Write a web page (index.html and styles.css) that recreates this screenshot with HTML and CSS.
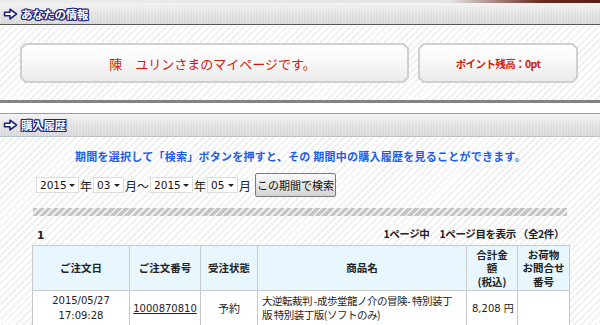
FILE: index.html
```html
<!DOCTYPE html>
<html lang="ja">
<head>
	<meta charset="UTF-8">
	<title>マイページ</title>
	<link rel="stylesheet" href="styles.css">
</head>
<body>
	<div class="top_line"></div>

	<div class="sec_head first">
		<svg class="arrow" width="15" height="12" viewBox="0 0 15 12"><path d="M1.5 4.2 H7 V1.2 L13.5 6 L7 10.8 V7.8 H1.5 Z" fill="#fff" stroke="#18227a" stroke-width="1.6" stroke-linejoin="round"/></svg>
		<span class="sec_title">あなたの情報</span>
	</div>
	<div class="info">
		<div class="box name_box"><div class="box_in">陳　ユリンさまのマイページです。</div></div>
		<div class="box point_box"><div class="box_in">ポイント残高：0pt</div></div>
	</div>

	<div class="sec_head second">
		<svg class="arrow" width="15" height="12" viewBox="0 0 15 12"><path d="M1.5 4.2 H7 V1.2 L13.5 6 L7 10.8 V7.8 H1.5 Z" fill="#fff" stroke="#18227a" stroke-width="1.6" stroke-linejoin="round"/></svg>
		<span class="sec_title">購入履歴</span>
	</div>
	<div class="history">
		<p class="guide">期間を選択して「検索」ボタンを押すと、その 期間中の購入履歴を見ることができます。</p>
		<div class="period">
			<span class="sel w43"><select><option>2015</option></select></span>
			<span class="unit">年</span>
			<span class="sel w31"><select><option>03</option></select></span>
			<span class="unit">月～</span>
			<span class="sel w43"><select><option>2015</option></select></span>
			<span class="unit">年</span>
			<span class="sel w31"><select><option>05</option></select></span>
			<span class="unit">月</span>
			<button class="search_btn">この期間で検索</button>
		</div>
		<div class="stripe_bar"></div>
		<div class="pager">
			<span class="count">1</span>
			<span class="page_info">1ページ中　1ページ目を表示 （全2件）</span>
		</div>
		<table class="orders">
			<colgroup>
				<col style="width:97px">
				<col style="width:71px">
				<col style="width:57px">
				<col style="width:209px">
				<col style="width:51px">
				<col style="width:52px">
			</colgroup>
			<tr>
				<th>ご注文日</th>
				<th>ご注文番号</th>
				<th>受注状態</th>
				<th>商品名</th>
				<th>合計金<br>額<br>(税込)</th>
				<th>お荷物<br>お問合せ<br>番号</th>
			</tr>
			<tr>
				<td class="c">2015/05/27<br>17:09:28</td>
				<td class="c"><a href="#">1000870810</a></td>
				<td class="c jp">予約</td>
				<td class="jp item">大逆転裁判 -成歩堂龍ノ介の冒険- 特別装丁版 特別装丁版(ソフトのみ)</td>
				<td class="price">8,208 円</td>
				<td></td>
			</tr>
		</table>
	</div>
</body>
</html>
```

FILE: styles.css
```css
*{
	margin: 0;
	padding: 0;
	box-sizing: border-box;
}
body{
	width: 600px;
	height: 325px;
	overflow: hidden;
	background-color: #fff;
	font-family: Verdana, "DejaVu Sans", "Noto Sans CJK JP", sans-serif;
	font-size: 12px;
	color: #222;
}
.top_line{
	height: 3px;
	background: linear-gradient(90deg, #ececec 0%, #e4e4e4 75%, #6a2a1e 90%, #5a1c14 100%);
}
.sec_head{
	display: flex;
	align-items: center;
	gap: 3px;
	height: 22px;
	padding-left: 3px;
	background: repeating-linear-gradient(90deg, rgba(255,255,255,0.25) 0 1px, rgba(0,0,0,0) 1px 3px),
		linear-gradient(#f2f2f2, #e2e2e2 50%, #d6d6d6);
	border-bottom: 1px solid #5a5a55;
}
.sec_head.second{
	height: 24px;
	border-top: 1px solid #a39a92;
	border-bottom: 1px solid #b8c4cc;
}
.sec_title{
	font-family: "Noto Sans CJK JP", sans-serif;
	font-size: 11.5px;
	font-weight: bold;
	color: #fff;
	letter-spacing: -0.3px;
	text-shadow: 1px 0 0 #18227a, -1px 0 0 #18227a, 0 1px 0 #18227a, 0 -1px 0 #18227a,
		1px 1px 0 #18227a, -1px -1px 0 #18227a, 1px -1px 0 #18227a, -1px 1px 0 #18227a;
}
.info,
.history{
	background: repeating-linear-gradient(135deg, #fff 0 3px, #f1f1f1 3px 5px);
}
.info{
	display: flex;
	gap: 9px;
	height: 78px;
	padding: 18px 0 0 20px;
	border-bottom: 3px solid #858380;
	margin-bottom: 10px;
}
.box{
	height: 40px;
	padding: 2px;
	background-color: #cfcfcf;
	clip-path: polygon(5px 0, calc(100% - 5px) 0, 100% 5px, 100% calc(100% - 5px), calc(100% - 5px) 100%, 5px 100%, 0 calc(100% - 5px), 0 5px);
}
.box_in{
	display: flex;
	align-items: center;
	justify-content: center;
	height: 100%;
	background: linear-gradient(#fff, #f7f7f7 50%, #ebebeb);
	clip-path: polygon(4px 0, calc(100% - 4px) 0, 100% 4px, 100% calc(100% - 4px), calc(100% - 4px) 100%, 4px 100%, 0 calc(100% - 4px), 0 4px);
	color: #d41a0c;
	font-family: "Noto Sans CJK JP", sans-serif;
}
.name_box{
	width: 389px;
}
.name_box .box_in{
	font-size: 13px;
	padding-right: 4px;
}
.point_box{
	width: 160px;
}
.point_box .box_in{
	font-size: 10.5px;
	font-weight: bold;
	letter-spacing: -0.6px;
}
.history{
	padding: 12px 31px 20px 32px;
}
.guide{
	text-align: center;
	font-family: "Noto Sans CJK JP", sans-serif;
	font-size: 11px;
	font-weight: bold;
	color: #1d5ee0;
	letter-spacing: 0.25px;
	line-height: 14px;
}
.period{
	display: flex;
	align-items: center;
	height: 24px;
	margin-top: 10px;
	padding-left: 4px;
}
.sel{
	position: relative;
	display: inline-block;
	height: 16px;
	background-color: #fff;
	border: 1px solid #dcdcdc;
}
.sel select{
	appearance: none;
	-webkit-appearance: none;
	display: block;
	width: 100%;
	height: 100%;
	border: none;
	background: transparent;
	padding-left: 3px;
	font-family: Verdana, "DejaVu Sans", sans-serif;
	font-size: 10.5px;
	line-height: 14px;
	color: #111;
}
.sel::after{
	content: "";
	position: absolute;
	right: 3px;
	top: 6px;
	border-left: 3px solid transparent;
	border-right: 3px solid transparent;
	border-top: 3px solid #222;
}
.w43{
	width: 43px;
}
.w31{
	width: 31px;
}
.unit{
	font-family: "Noto Sans CJK JP", sans-serif;
	font-size: 12px;
	color: #222;
	margin: 0 1px 0 1px;
}
.search_btn{
	width: 81px;
	height: 24px;
	margin-left: 3px;
	border: 1px solid #7a7a7a;
	border-radius: 2px;
	background: linear-gradient(#fafafa, #e6e6e6 50%, #d4d4d4);
	font-family: "Noto Sans CJK JP", sans-serif;
	font-size: 11px;
	color: #111;
}
.stripe_bar{
	width: 534px;
	height: 8px;
	margin: 11px 0 0 1px;
	background: repeating-linear-gradient(135deg, #c4c4c4 0 3px, #efefef 3px 5px);
}
.pager{
	display: flex;
	justify-content: space-between;
	align-items: flex-end;
	height: 25px;
	padding: 0 5px 0 5px;
	font-weight: bold;
	font-size: 10.5px;
}
.page_info{
	font-family: "Noto Sans CJK JP", sans-serif;
	letter-spacing: -0.4px;
}
.orders{
	width: 537px;
	border-collapse: collapse;
	table-layout: fixed;
	background-color: #fff;
	font-size: 10px;
	margin-top: 4px;
}
.orders th,
.orders td{
	border: 1px solid #c9c9c9;
}
.orders th{
	height: 45px;
	padding: 0 1px;
	background-color: #e8f6fe;
	font-weight: bold;
	font-family: "Noto Sans CJK JP", sans-serif;
	font-size: 10.5px;
	line-height: 13.5px;
	color: #222;
}
.orders td{
	height: 34px;
	padding: 2px 3px;
	line-height: 15px;
	font-family: Verdana, "DejaVu Sans", "Noto Sans CJK JP", sans-serif;
	vertical-align: middle;
}
.orders td.c{
	text-align: center;
}
.orders td.jp{
	font-family: "Noto Sans CJK JP", sans-serif;
	font-size: 11px;
}
.orders td.item{
	padding: 2px 9px 2px 4px;
	font-size: 10.5px;
	letter-spacing: -0.5px;
	line-height: 14px;
}
.orders td.price{
	white-space: nowrap;
	padding-left: 5px;
}
.orders a{
	color: #222;
	text-decoration: underline;
}
```
